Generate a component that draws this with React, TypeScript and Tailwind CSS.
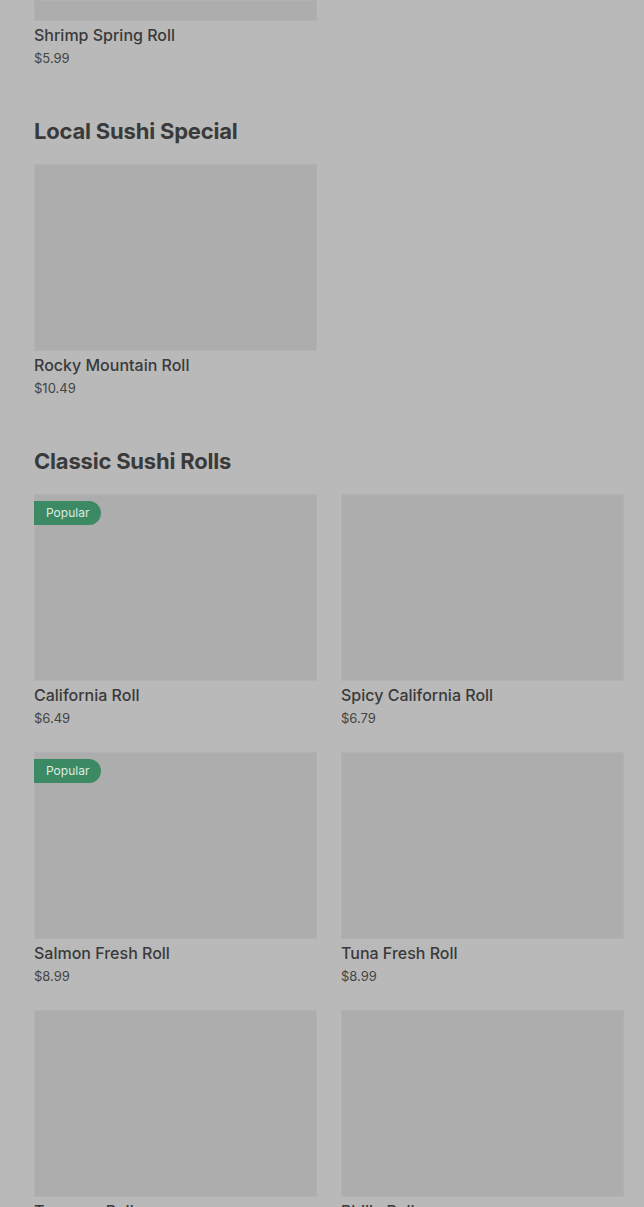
type Item = { name: string; price: string; popular?: boolean };

const sections: { title: string; items: Item[] }[] = [
  { title: "Local Sushi Special", items: [{ name: "Rocky Mountain Roll", price: "$10.49" }] },
  {
    title: "Classic Sushi Rolls",
    items: [
      { name: "California Roll", price: "$6.49", popular: true },
      { name: "Spicy California Roll", price: "$6.79" },
      { name: "Salmon Fresh Roll", price: "$8.99", popular: true },
      { name: "Tuna Fresh Roll", price: "$8.99" },
      { name: "Tempura Roll", price: "$7.49" },
      { name: "Philly Roll", price: "$7.99" },
    ],
  },
];

function Card({ item, imgH = "h-[187px]" }: { item: Item; imgH?: string }) {
  return (
    <div className="flex flex-col">
      <div className={`relative ${imgH} bg-[#adadad] border border-[#b1b1b1]`}>
        {item.popular && (
          <span className="absolute -left-px top-[6px] h-6 px-3 rounded-r-full bg-[#3c8a63] text-[12px] leading-6 text-[#dcebe2]">
            Popular
          </span>
        )}
      </div>
      <div className="mt-[2px] text-[16px] leading-6 font-medium text-[#3a3a3a]">{item.name}</div>
      <div className="mt-px text-[13px] leading-5 text-[#444]">{item.price}</div>
    </div>
  );
}

export default function App() {
  return (
    <div className="min-h-screen bg-[#b9b9b9] pl-[34px] pr-[20px] pb-10 overflow-hidden" style={{ fontFamily: "Inter, 'Noto Sans', sans-serif" }}>
      <div className="grid grid-cols-2 gap-x-6">
        <Card item={{ name: "Shrimp Spring Roll", price: "$5.99" }} imgH="h-[21px]" />
      </div>
      {sections.map((s) => (
        <section key={s.title} className="mt-[47px]">
          <h2 className="text-[22px] leading-8 font-bold tracking-[-0.2px] text-[#3a3a3a] mb-[17px]">{s.title}</h2>
          <div className="grid grid-cols-2 gap-x-6 gap-y-6">
            {s.items.map((it) => (
              <Card key={it.name} item={it} />
            ))}
          </div>
        </section>
      ))}
    </div>
  );
}
